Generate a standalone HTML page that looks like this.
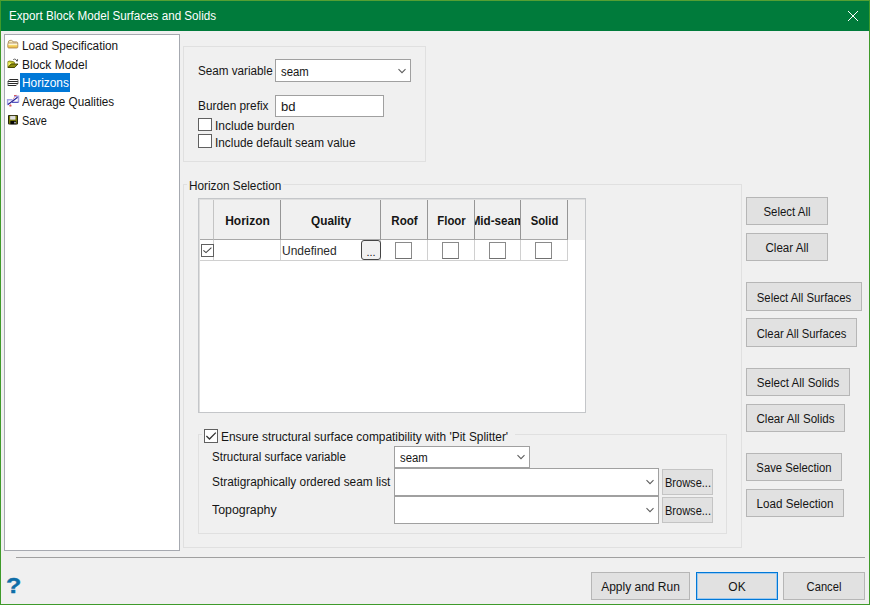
<!DOCTYPE html>
<html><head><meta charset="utf-8"><title>Export Block Model Surfaces and Solids</title>
<style>
html,body{margin:0;padding:0;}
body{width:870px;height:605px;overflow:hidden;background:#f0f0f0;font-family:"Liberation Sans",sans-serif;font-size:12px;color:#151515;position:relative;}
.abs{position:absolute;box-sizing:border-box;}
.t{position:absolute;white-space:nowrap;line-height:16px;height:16px;transform-origin:0 50%;margin-top:1px;}
.btn{position:absolute;box-sizing:border-box;background:#e1e1e1;border:1px solid #b6b6b6;}
.btn .t{left:0;right:0;text-align:center;}
.cb{position:absolute;box-sizing:border-box;width:13px;height:13px;background:#fff;border:1px solid #606060;}
.combo{position:absolute;box-sizing:border-box;background:#fff;border:1px solid #a0a0a0;}
.tb{position:absolute;box-sizing:border-box;background:#fff;border:1px solid #a0a0a0;}
.grp{position:absolute;box-sizing:border-box;border:1px solid #e0e0e0;}
.hc{top:200px;height:40px;border-right:1px solid #969696;border-bottom:1px solid #a8a8a8;background:#f0f0f0;}
.hb{left:0;right:0;text-align:center;top:11.5px;font-weight:bold;transform-origin:50% 50%;}
.dc{top:240px;height:21px;border-right:1px solid #d0d0d0;}
.gcb{width:17px;height:17px;border-color:#8a8a8a;border-bottom-color:#707070;}
</style></head><body>
<!-- window frame -->
<div class="abs" style="left:0;top:0;width:870px;height:605px;border:1px solid #3f9a2a;border-top-color:#55a033;"></div>
<div class="abs" style="left:1px;top:1px;width:868px;height:30px;background:#007b3b;"></div>
<div class="t " style="left:9px;top:7px;transform:scaleX(0.97);color:#fff;">Export Block Model Surfaces and Solids</div>
<svg class="abs" style="left:846px;top:9px;" width="14" height="14" viewBox="0 0 14 14"><path d="M2 2 L12 12 M12 2 L2 12" stroke="#fff" stroke-width="1" fill="none"/></svg>
<!-- tree -->
<div class="abs" style="left:4px;top:34px;width:176px;height:517px;background:#fff;border:1px solid #a6a9b0;"></div>
<div class="abs" style="left:20px;top:73px;width:50px;height:19px;background:#0078d7;"></div>
<div class="t " style="left:22px;top:37px;transform:scaleX(0.98);">Load Specification</div>
<div class="t " style="left:22px;top:56px;">Block Model</div>
<div class="t " style="left:22px;top:74px;transform:scaleX(0.99);color:#fff;">Horizons</div>
<div class="t " style="left:22px;top:93px;transform:scaleX(0.975);">Average Qualities</div>
<div class="t " style="left:22px;top:112px;transform:scaleX(0.91);">Save</div>
<svg class="abs" style="left:5px;top:37px;" width="16" height="14" viewBox="5 37 16 14">
<defs><linearGradient id="fg" x1="0" y1="0" x2="0" y2="1"><stop offset="0" stop-color="#ffffff"/><stop offset="0.3" stop-color="#fff6d0"/><stop offset="0.45" stop-color="#f8dc70"/><stop offset="1" stop-color="#e6ae38"/></linearGradient></defs>
<path d="M8.3 43.6 L8.3 42 Q8.6 40.4 10 40.4 L11.6 40.4 Q12.6 40.5 13 41.9 L16.8 41.9 Q17.8 42 17.8 43.6 Z" fill="#f6ebc0" stroke="#a88a5c" stroke-width="0.9"/>
<rect x="7.8" y="43" width="10" height="5" rx="1" fill="url(#fg)" stroke="#b08c56" stroke-width="0.9"/>
</svg>
<svg class="abs" style="left:5px;top:56px;" width="16" height="14" viewBox="5 56 16 14">
<path d="M7.9 67.3 L7.9 61.6 L9.6 61 L13 61.6 L14.4 62.2 L14.4 67.3 Z" fill="#c4c430" stroke="#7c7c18" stroke-width="0.8"/>
<path d="M8.4 62 L8.4 66 L11.4 63.6 Z" fill="#f6f66a"/>
<path d="M8 67.5 L11.2 64 L18 64 L14.6 67.5 Z" fill="#8c8c0e" stroke="#3e3e00" stroke-width="0.9"/>
<path d="M13.2 59.6 Q14.6 58.6 16 59.6" stroke="#555" stroke-width="0.9" fill="none"/>
<path d="M16 60.8 L17.6 59.4 L17.4 61.2 Z" fill="#333" stroke="#333" stroke-width="0.6"/>
</svg>
<svg class="abs" style="left:5px;top:75px;" width="16" height="14" viewBox="5 75 16 14">
<path d="M9.4 79.5 L18 79.5 M7.8 81.5 L18 81.5 M7.8 83.5 L18 83.5 M7.8 85.5 L16.2 85.5" stroke="#2a2a2a" stroke-width="1" fill="none"/>
<path d="M9.4 79.5 L8 81.5 L8 85.5 M18 79.5 L18 83.5 L16.2 85.5" stroke="#555" stroke-width="0.8" fill="none"/>
</svg>
<svg class="abs" style="left:5px;top:93px;" width="16" height="16" viewBox="5 93 16 16">
<path d="M12.6 99.8 L7.6 99.8 L7.6 105.2 M14 96.3 L18.5 96.3 L18.5 102.3" stroke="#a4a0e4" stroke-width="1.5" fill="none"/>
<path d="M12 102.3 L18.5 102.3" stroke="#3c38b4" stroke-width="1.1" fill="none"/>
<path d="M8 104.6 L17.6 97.2" stroke="#262094" stroke-width="1.2" fill="none"/>
<path d="M14 95.6 L16.6 95.4 M13.4 98.4 L14.4 97.6 M9 105.8 L11.6 105.8 M10.6 104.4 L10.6 106.4" stroke="#d8555a" stroke-width="1" fill="none"/>
</svg>
<svg class="abs" style="left:8px;top:115px;" width="10" height="10" viewBox="0 0 10 10">
<rect x="0" y="0" width="10" height="9.4" rx="0.8" fill="#1e1e10"/>
<rect x="0.9" y="0.8" width="8.2" height="8" fill="#7a7a08"/>
<rect x="2.2" y="0.9" width="5.2" height="3.8" fill="#d6d6d6"/>
<path d="M2.2 2.2 L7.4 2.2 M2.2 3.5 L7.4 3.5" stroke="#efefef" stroke-width="0.5"/>
<rect x="2.4" y="5.9" width="5.8" height="3.3" fill="#050505"/>
<rect x="6.2" y="6.8" width="1.6" height="1.6" fill="#c0c0c0"/></svg>
<!-- group 1 -->
<div class="grp" style="left:183px;top:46px;width:243px;height:116px;"></div>
<div class="t " style="left:198px;top:62px;transform:scaleX(0.974);">Seam variable</div>
<div class="combo" style="left:275px;top:59px;width:136px;height:23px;"></div>
<div class="t " style="left:280.5px;top:62.5px;transform:scaleX(0.945);">seam</div>
<svg class="abs" style="left:397px;top:67px;" width="10" height="8" viewBox="0 0 10 8"><path d="M1.5 2.2 L5 5.7 L8.5 2.2" stroke="#5c5c5c" stroke-width="1.05" fill="none"/></svg>
<div class="t " style="left:198px;top:97px;transform:scaleX(0.988);">Burden prefix</div>
<div class="tb" style="left:275px;top:95px;width:109px;height:22px;"></div>
<div class="t " style="left:280.5px;top:98px;transform:scaleX(1.09);">bd</div>
<div class="cb" style="left:198px;top:118px;width:14px;height:13px;"></div>
<div class="t " style="left:215px;top:117px;">Include burden</div>
<div class="cb" style="left:198px;top:134px;width:14px;height:14px;"></div>
<div class="t " style="left:215px;top:134px;transform:scaleX(0.984);">Include default seam value</div>
<!-- group 2 -->
<div class="grp" style="left:183px;top:184px;width:559px;height:364px;"></div>
<div class="t " style="left:187px;top:177px;transform:scaleX(0.982);background:#f0f0f0;padding:0 2px;">Horizon Selection</div>
<!-- grid -->
<div class="abs" style="left:198px;top:198px;width:388px;height:215px;background:#fff;border:1px solid #c4c6c9;"></div>
<div class="abs" style="left:199px;top:199px;width:386px;height:213px;border-left:1px solid #dedede;border-top:1px solid #dedede;"></div>
<div class="abs" style="left:200px;top:200px;width:385px;height:40px;background:#f0f0f0;"></div>
<div class="abs hc" style="left:200px;width:14px;border-right-color:#c4c4c4;"></div>
<div class="abs hc" style="left:214px;width:67px;"><div class="t hb" style="left:1px;transform:scaleX(1.0);">Horizon</div></div>
<div class="abs hc" style="left:281px;width:100px;"><div class="t hb" style="left:1px;transform:scaleX(0.98);">Quality</div></div>
<div class="abs hc" style="left:381px;width:47px;"><div class="t hb" style="left:1px;transform:scaleX(0.97);">Roof</div></div>
<div class="abs hc" style="left:428px;width:47px;"><div class="t hb" style="left:1px;transform:scaleX(0.95);">Floor</div></div>
<div class="abs hc" style="left:475px;width:46px;overflow:hidden;"><div class="t hb" style="left:-8px;right:-8px;transform:scaleX(0.97);">Mid-seam</div></div>
<div class="abs hc" style="left:521px;width:47px;"><div class="t hb" style="left:1px;transform:scaleX(0.94);">Solid</div></div>
<div class="abs" style="left:200px;top:240px;width:368px;height:21px;border-bottom:1px solid #d0d0d0;"></div>
<div class="abs dc" style="left:200px;width:14px;"></div>
<div class="abs dc" style="left:214px;width:67px;"></div>
<div class="abs dc" style="left:281px;width:100px;"></div>
<div class="abs dc" style="left:381px;width:47px;"></div>
<div class="abs dc" style="left:428px;width:47px;"></div>
<div class="abs dc" style="left:475px;width:46px;"></div>
<div class="abs dc" style="left:521px;width:47px;"></div>
<div class="cb" style="left:201px;top:244px;border-color:#606060;"></div>
<svg class="abs" style="left:201px;top:244px;" width="13" height="13" viewBox="0 0 13 13"><path d="M2.4 6.4 L5 8.6 L10.4 3.6" stroke="#444" stroke-width="1.1" fill="none"/></svg>
<div class="t " style="left:282px;top:242px;color:#2a2a2a;">Undefined</div>
<div class="abs" style="left:361px;top:240px;width:20px;height:20px;background:#f0f0f0;border:1px solid #444;border-radius:3px;"><div class="t" style="left:0;right:0;text-align:center;top:2px;font-size:11px;">...</div></div>
<div class="cb gcb" style="left:395px;top:242px;"></div>
<div class="cb gcb" style="left:442px;top:242px;"></div>
<div class="cb gcb" style="left:489px;top:242px;"></div>
<div class="cb gcb" style="left:535px;top:242px;"></div>
<!-- right buttons -->
<div class="btn" style="left:746px;top:197px;width:82px;height:28px;"><div class="t" style="top:5px;transform:scaleX(0.952);transform-origin:50% 50%;">Select All</div></div>
<div class="btn" style="left:746px;top:233px;width:82px;height:28px;"><div class="t" style="top:5px;transform:scaleX(0.963);transform-origin:50% 50%;">Clear All</div></div>
<div class="btn" style="left:746px;top:282px;width:116px;height:29px;"><div class="t" style="top:6px;transform:scaleX(0.944);transform-origin:50% 50%;">Select All Surfaces</div></div>
<div class="btn" style="left:746px;top:318px;width:111px;height:29px;"><div class="t" style="top:6px;transform:scaleX(0.939);transform-origin:50% 50%;">Clear All Surfaces</div></div>
<div class="btn" style="left:746px;top:368px;width:104px;height:28px;"><div class="t" style="top:5px;transform:scaleX(0.965);transform-origin:50% 50%;">Select All Solids</div></div>
<div class="btn" style="left:746px;top:404px;width:99px;height:28px;"><div class="t" style="top:5px;transform:scaleX(0.968);transform-origin:50% 50%;">Clear All Solids</div></div>
<div class="btn" style="left:746px;top:453px;width:96px;height:28px;"><div class="t" style="top:5px;transform:scaleX(0.94);transform-origin:50% 50%;">Save Selection</div></div>
<div class="btn" style="left:746px;top:489px;width:98px;height:28px;"><div class="t" style="top:5px;transform:scaleX(0.968);transform-origin:50% 50%;">Load Selection</div></div>
<!-- inner group -->
<div class="grp" style="left:198px;top:434px;width:529px;height:100px;"></div>
<div class="abs" style="left:202px;top:428px;width:313px;height:16px;background:#f0f0f0;"></div>
<div class="cb" style="left:204px;top:429px;width:14px;height:14px;"></div>
<svg class="abs" style="left:204px;top:429px;" width="14" height="14" viewBox="0 0 14 14"><path d="M2.4 7 L5.5 10 L11.8 3.6" stroke="#333" stroke-width="1.3" fill="none"/></svg>
<div class="t " style="left:221px;top:428px;transform:scaleX(0.99);">Ensure structural surface compatibility with 'Pit Splitter'</div>
<div class="t " style="left:212px;top:448px;transform:scaleX(0.96);">Structural surface variable</div>
<div class="combo" style="left:394px;top:446px;width:136px;height:22px;"></div>
<div class="t " style="left:399.5px;top:449px;transform:scaleX(0.945);">seam</div>
<svg class="abs" style="left:516px;top:453px;" width="10" height="8" viewBox="0 0 10 8"><path d="M1.5 2.2 L5 5.7 L8.5 2.2" stroke="#5c5c5c" stroke-width="1.05" fill="none"/></svg>
<div class="t " style="left:212px;top:473px;transform:scaleX(0.987);">Stratigraphically ordered seam list</div>
<div class="combo" style="left:394px;top:468px;width:265px;height:28px;"></div>
<svg class="abs" style="left:645px;top:478px;" width="10" height="8" viewBox="0 0 10 8"><path d="M1.5 2.2 L5 5.7 L8.5 2.2" stroke="#5c5c5c" stroke-width="1.05" fill="none"/></svg>
<div class="btn" style="left:662px;top:469px;width:51px;height:26px;border-color:#c4c4c4;"><div class="t" style="top:4px;transform:scaleX(0.92);transform-origin:50% 50%;">Browse...</div></div>
<div class="t " style="left:212px;top:501px;transform:scaleX(1.03);">Topography</div>
<div class="combo" style="left:394px;top:496px;width:265px;height:28px;"></div>
<svg class="abs" style="left:645px;top:506px;" width="10" height="8" viewBox="0 0 10 8"><path d="M1.5 2.2 L5 5.7 L8.5 2.2" stroke="#5c5c5c" stroke-width="1.05" fill="none"/></svg>
<div class="btn" style="left:662px;top:497px;width:51px;height:26px;border-color:#c4c4c4;"><div class="t" style="top:4px;transform:scaleX(0.92);transform-origin:50% 50%;">Browse...</div></div>
<!-- bottom -->
<div class="abs" style="left:16px;top:557px;width:849px;height:1px;background:#a0a0a0;"></div>
<div class="t" style="left:6px;top:573px;font-size:22px;font-weight:bold;color:#0f6ea8;-webkit-text-stroke:0.4px #0f6ea8;line-height:24px;height:24px;transform:scaleX(1.14);">?</div>
<div class="btn" style="left:591px;top:572px;width:99px;height:28px;"><div class="t" style="top:5px;">Apply and Run</div></div>
<div class="btn" style="left:696px;top:572px;width:82px;height:28px;border:1px solid #0078d7;box-shadow:inset 0 0 0 1px #9cc8ee;"><div class="t" style="top:5px;">OK</div></div>
<div class="btn" style="left:783px;top:572px;width:82px;height:28px;"><div class="t" style="top:5px;transform:scaleX(0.93);transform-origin:50% 50%;">Cancel</div></div>
</body></html>
